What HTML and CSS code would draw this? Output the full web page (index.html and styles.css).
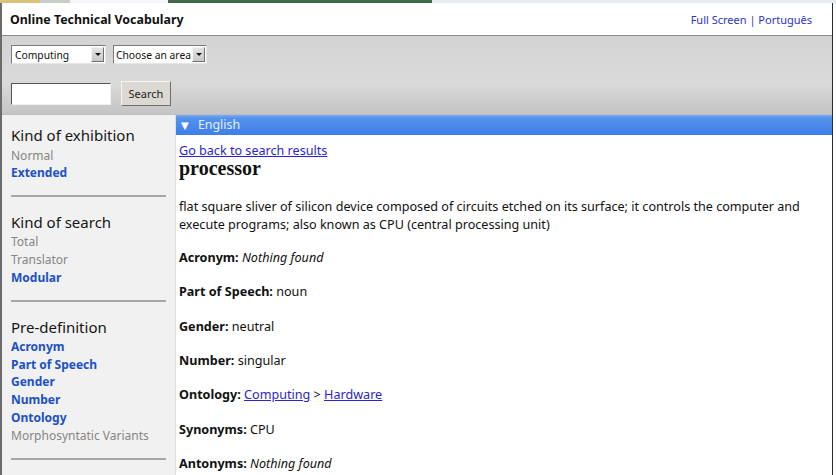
FILE: index.html
```html
<!DOCTYPE html>
<html lang="en">
<head>
  <meta charset="UTF-8" />
  <title>Online Technical Vocabulary</title>
  <link rel="stylesheet" href="styles.css">
</head>
<body>
  <div class="top-strip">
    <span class="strip-a"></span>
    <span class="strip-b"></span>
    <span class="strip-c"></span>
    <span class="strip-d"></span>
  </div>

  <div class="frame">
    <header class="header">
      <h1 class="site-title">Online Technical Vocabulary</h1>
      <nav class="header-links">
        <a href="#">Full Screen</a> | <a href="#">Português</a>
      </nav>
    </header>

    <div class="toolbar">
      <div class="toolbar-row">
        <div class="combo combo-domain">
          <span class="combo-text">Computing</span>
          <span class="combo-btn"></span>
        </div>
        <div class="combo combo-area">
          <span class="combo-text">Choose an area</span>
          <span class="combo-btn"></span>
        </div>
      </div>
      <div class="toolbar-row search-row">
        <input class="search-input" type="text">
        <button class="search-btn">Search</button>
      </div>
    </div>

    <div class="columns">
      <aside class="sidebar">
        <section class="side-group">
          <h2>Kind of exhibition</h2>
          <ul>
            <li class="off">Normal</li>
            <li class="on">Extended</li>
          </ul>
        </section>
        <section class="side-group">
          <h2>Kind of search</h2>
          <ul>
            <li class="off">Total</li>
            <li class="off">Translator</li>
            <li class="on">Modular</li>
          </ul>
        </section>
        <section class="side-group">
          <h2>Pre-definition</h2>
          <ul>
            <li class="on">Acronym</li>
            <li class="on">Part of Speech</li>
            <li class="on">Gender</li>
            <li class="on">Number</li>
            <li class="on">Ontology</li>
            <li class="off">Morphosyntatic Variants</li>
          </ul>
        </section>
      </aside>

      <main class="content">
        <div class="lang-bar"><span class="arrow">&#9660;</span> English</div>
        <div class="entry">
          <a class="back-link" href="#">Go back to search results</a>
          <h3 class="term">processor</h3>
          <p class="definition">flat square sliver of silicon device composed of circuits etched on its surface; it controls the computer and execute programs; also known as CPU (central processing unit)</p>
          <p><b>Acronym:</b> <i>Nothing found</i></p>
          <p><b>Part of Speech:</b> noun</p>
          <p><b>Gender:</b> neutral</p>
          <p><b>Number:</b> singular</p>
          <p><b>Ontology:</b> <a href="#">Computing</a> &gt; <a href="#">Hardware</a></p>
          <p><b>Synonyms:</b> CPU</p>
          <p><b>Antonyms:</b> <i>Nothing found</i></p>
        </div>
      </main>
    </div>
  </div>
</body>
</html>
```

FILE: styles.css
```css
body {
  margin: 0;
  overflow: hidden;
  height: 475px;
  background: #ffffff;
  font-family: "Noto Sans", "DejaVu Sans", sans-serif;
  font-size: 12px;
  color: #111111;
}

.top-strip {
  display: flex;
  height: 3px;
  background: #e8ebf2;
}

.strip-a { width: 40px; background: #d9c27a; }
.strip-b { width: 30px; background: #c9cdc8; }
.strip-c { width: 98px; background: #f4f6fa; }
.strip-d { width: 264px; background: #3f6b4a; }

.frame {
  width: 830px;
  height: 472px;
  border-left: 2px solid #6b6b6b;
  border-right: 1px solid #2a2a2a;
  display: flex;
  flex-direction: column;
}

/* header */

.header {
  height: 32px;
  display: flex;
  align-items: center;
  justify-content: space-between;
  padding: 0 20px 0 8px;
  border-bottom: 1px solid #8a8a8a;
  background: #ffffff;
}

.site-title {
  margin: 0;
  font-size: 12.4px;
  font-weight: bold;
  color: #111111;
}

.header-links {
  font-size: 11px;
  color: #3340c0;
}

.header-links a {
  color: #2a35c8;
  text-decoration: none;
}

/* toolbar */

.toolbar {
  height: 79px;
  box-sizing: border-box;
  padding: 9px 0 0 9px;
  background: linear-gradient(to bottom, #d3d3d3 0%, #dadada 60%, #c4c4c4 100%);
  border-bottom: 1px solid #bdbdbd;
}

.toolbar-row {
  display: flex;
  gap: 7px;
  align-items: center;
}

.search-row {
  margin-top: 17px;
  gap: 10px;
}

.combo {
  display: flex;
  align-items: center;
  height: 19px;
  box-sizing: border-box;
  background: #ffffff;
  border: 1px solid;
  border-color: #7a7a7a #e6e6e6 #e6e6e6 #7a7a7a;
  font-size: 10.3px;
  padding-left: 3px;
}

.combo-domain { width: 95px; }
.combo-area { width: 94px; padding-left: 2px; }

.combo-text {
  flex: 1;
  white-space: nowrap;
  overflow: hidden;
}

.combo-btn {
  position: relative;
  flex: none;
  width: 13px;
  height: 15px;
  margin-right: 1px;
  background: linear-gradient(to bottom, #e4e4e4, #c8c8c8);
  border: 1px solid;
  border-color: #f4f4f4 #6f6f6f #6f6f6f #f4f4f4;
  box-sizing: border-box;
}

.combo-btn::after {
  content: "";
  position: absolute;
  left: 3px;
  top: 5px;
  border-left: 3px solid transparent;
  border-right: 3px solid transparent;
  border-top: 3px solid #111111;
}

.search-input {
  width: 100px;
  height: 22px;
  box-sizing: border-box;
  margin: 0;
  border: 1px solid;
  border-color: #555555 #f0f0f0 #f0f0f0 #555555;
  background: #ffffff;
}

.search-btn {
  width: 50px;
  height: 25px;
  margin: 0;
  font-family: "Noto Sans", "DejaVu Sans", sans-serif;
  font-size: 11px;
  color: #222222;
  background: #dcd8d2;
  border: 1px solid;
  border-color: #f6f6f6 #6f6f6f #6f6f6f #f6f6f6;
}

/* columns */

.columns {
  flex: 1;
  display: flex;
  min-height: 0;
}

.sidebar {
  width: 174px;
  box-sizing: border-box;
  padding: 9px 9px 0 9px;
  background: #f1f1f1;
  border-right: 1px solid #dedede;
}

.side-group {
  padding-bottom: 13.5px;
  margin-bottom: 13.5px;
  border-bottom: 2px solid #a8a8a8;
}

.side-group h2 {
  margin: 0;
  font-size: 15px;
  font-weight: normal;
  line-height: 22.5px;
  color: #151515;
}

.side-group ul {
  list-style: none;
  margin: 0;
  padding: 0;
}

.side-group li {
  line-height: 17.7px;
  font-size: 12px;
}

.side-group .off {
  color: #858585;
}

.side-group .on {
  color: #2050c8;
  font-weight: bold;
}

/* content */

.content {
  flex: 1;
  background: #ffffff;
  font-size: 12.6px;
}

.lang-bar {
  height: 20px;
  line-height: 20px;
  padding-left: 5px;
  color: #e6efff;
  font-size: 12.4px;
  background: linear-gradient(to bottom, #7aaaf2 0%, #5592ee 15%, #3d7ee8 100%);
}

.lang-bar .arrow {
  color: #ffffff;
  font-size: 10px;
  margin-right: 6px;
}

.entry {
  padding: 8px 3px 0 3px;
}

.entry a {
  color: #2a24d0;
}

.back-link {
  display: block;
  line-height: 15px;
}

.term {
  margin: 0 0 20px 0;
  font-family: "Liberation Serif", "Times New Roman", serif;
  font-size: 20px;
  font-weight: bold;
  line-height: 20px;
}

.entry p {
  margin: 0 0 16px 0;
  line-height: 18.3px;
}

.entry .definition {
  margin-bottom: 14.5px;
}
```
